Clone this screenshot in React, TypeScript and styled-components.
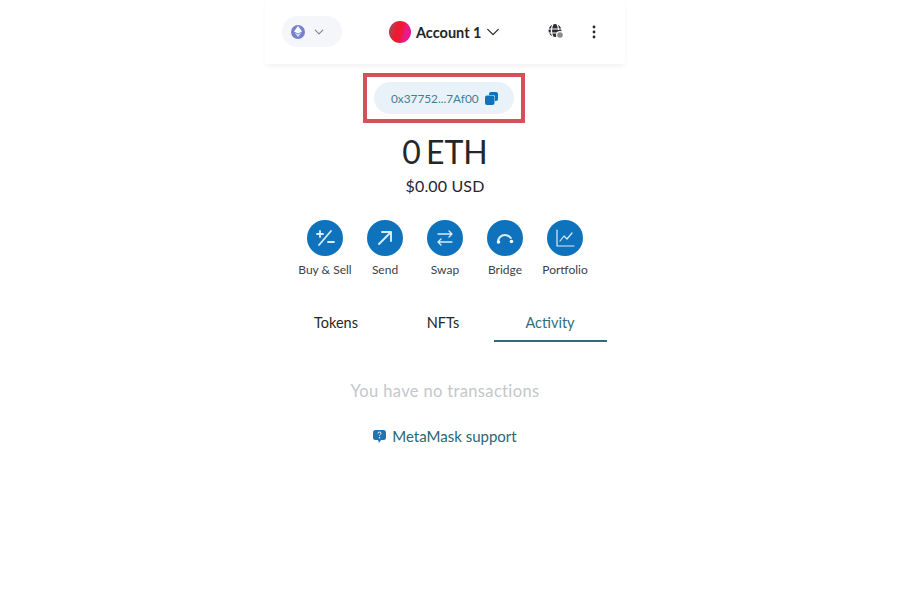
import React from 'react';
import styled, {createGlobalStyle} from 'styled-components';

const GlobalStyle = createGlobalStyle`
  html, body {
    margin: 0;
    padding: 0;
    background: #fff;
  }
  body {
    font-family: Lato, "Noto Sans", sans-serif;
    color: #24272a;
  }
`

const Page = styled.div`
  width: 900px;
  height: 600px;
  display: flex;
  justify-content: center;
  overflow: hidden;
`

const Wallet = styled.div`
  width: 360px;
  margin-left: -10px;
  display: flex;
  flex-direction: column;
  align-items: center;
`

const Header = styled.header`
  width: 100%;
  height: 64px;
  box-sizing: border-box;
  padding: 16px 14px 0 17px;
  display: flex;
  align-items: flex-start;
  box-shadow: 0 3px 5px -1px rgba(0, 0, 0, 0.06);
`

const NetworkPill = styled.div`
  width: 60px;
  height: 31px;
  box-sizing: border-box;
  padding-left: 9px;
  display: flex;
  align-items: center;
  gap: 9px;
  border-radius: 16px;
  background: #f4f6f9;
`

const NetworkDot = styled.div`
  width: 14px;
  height: 14px;
  border-radius: 50%;
  background: #7583cf;
  display: flex;
  align-items: center;
  justify-content: center;
`

const AccountButton = styled.div`
  margin-left: 47px;
  height: 32px;
  display: flex;
  align-items: center;
  gap: 4px;
  font-size: 14.5px;
  font-weight: 700;
  color: #24272a;
`

const Avatar = styled.div`
  width: 22px;
  height: 22px;
  border-radius: 50%;
  margin-right: 1px;
  background: linear-gradient(105deg, #8a5a68 0%, #ea1c2c 35%, #f0183a 55%, #ea1a8c 72%, #e01590 100%);
`

const HeaderIcons = styled.div`
  margin-left: 47px;
  height: 32px;
  display: flex;
  align-items: center;
  gap: 20px;
`

const IconButton = styled.div`
  width: 18px;
  height: 18px;
  display: flex;
  align-items: center;
  justify-content: center;
`

const AddressFrame = styled.div`
  margin-top: 9px;
  margin-left: -2px;
  width: 162px;
  height: 50px;
  box-sizing: border-box;
  border: 4px solid #d2525a;
  display: flex;
  align-items: center;
  justify-content: center;
`

const AddressPill = styled.div`
  width: 140px;
  height: 32px;
  box-sizing: border-box;
  padding-left: 17px;
  display: flex;
  align-items: center;
  gap: 6px;
  border-radius: 16px;
  background: #e8f2f8;
  font-size: 11.8px;
  color: #3f7f96;
`

const Balance = styled.div`
  margin-top: 7px;
  font-size: 32px;
  line-height: 44px;
  color: #24272a;
  word-spacing: -3px;
`

const Fiat = styled.div`
  margin-top: 2px;
  font-size: 16px;
  letter-spacing: 0.15px;
  line-height: 20px;
  color: #24272a;
`

const Actions = styled.div`
  margin-top: 24px;
  display: grid;
  grid-template-columns: repeat(5, 60px);
`

const Action = styled.div`
  display: flex;
  flex-direction: column;
  align-items: center;
  gap: 6px;
`

const ActionCircle = styled.div`
  width: 36px;
  height: 36px;
  border-radius: 50%;
  background: #0f72bd;
  display: flex;
  align-items: center;
  justify-content: center;
`

const ActionLabel = styled.span`
  font-size: 12px;
  line-height: 16px;
  white-space: nowrap;
  color: #3c4146;
`

const Tabs = styled.div`
  margin-top: 31px;
  margin-left: -4px;
  display: grid;
  grid-template-columns: repeat(3, 107px);
`

const Tab = styled.div<{ active?: boolean }>`
  position: relative;
  height: 33px;
  line-height: 28px;
  text-align: center;
  font-size: 14.5px;
  color: ${({active}) => active ? '#2f6f7e' : '#24272a'};

  &::after {
    content: '';
    display: ${({active}) => active ? 'block' : 'none'};
    position: absolute;
    left: -3px;
    right: -3px;
    bottom: 0;
    height: 2px;
    background: #2a6f78;
  }
`

const EmptyText = styled.div`
  margin-top: 38px;
  font-size: 16.500px;
  letter-spacing: 0.35px;
  line-height: 22px;
  color: #c4c7ca;
`

const Support = styled.div`
  margin-top: 22px;
  display: flex;
  align-items: center;
  gap: 6px;
  font-size: 15px;
  line-height: 24px;
  color: #2b6675;
`

const Chevron = ({size, color, width}: { size: number, color: string, width: number }) => (
  <svg width={size} height={size} viewBox="0 0 16 16" fill="none">
    <path d="M2 5l6 6 6-6" stroke={color} strokeWidth={width} strokeLinecap="round" strokeLinejoin="round" />
  </svg>
);

const stroke = {fill: 'none', stroke: '#d9eefa', strokeWidth: 1.6, strokeLinecap: 'round' as const, strokeLinejoin: 'round' as const};

const actions = [
  {
    label: 'Buy & Sell',
    icon: <path d="M3 7h6M6 4v6M5 18L17 4M14 15h6" {...stroke} strokeWidth={1.800} />,
  },
  {
    label: 'Send',
    icon: <path d="M5 17L17 5M8 5h9v9" {...stroke} strokeWidth={1.900} />,
  },
  {
    label: 'Swap',
    icon: <path d="M4 7h14M15 4l3 3-3 3M18 15H4M7 12l-3 3 3 3" {...stroke} strokeWidth={1.300} />,
  },
  {
    label: 'Bridge',
    icon: (
      <>
        <path d="M4 15c0-4 3-7 7-7 2.500 0 4.500 1.200 5.800 3" {...stroke} strokeWidth={2} />
        <circle cx="4.500" cy="15" r="1.800" fill="#fff" />
        <circle cx="17.500" cy="14.500" r="1.800" fill="#fff" />
      </>
    ),
  },
  {
    label: 'Portfolio',
    icon: <path d="M3 3v16h17M6 14l4-5 3 3 5-6" {...stroke} strokeWidth={1.200} />,
  },
];

const App = () => (
  <>
    <GlobalStyle />
    <Page>
      <Wallet>
        <Header>
          <NetworkPill>
            <NetworkDot>
              <svg width="8" height="11" viewBox="0 0 8 11">
                <path d="M4 0L0 5.500 4 7.500 8 5.500z" fill="#fff" />
                <path d="M0.500 6.500L4 11l3.500-4.500L4 8.500z" fill="#dfe3f7" />
              </svg>
            </NetworkDot>
            <Chevron size={10} color="#7d8590" width={1.800} />
          </NetworkPill>
          <AccountButton>
            <Avatar />
            Account 1
            <Chevron size={14} color="#24272a" width={1.500} />
          </AccountButton>
          <HeaderIcons>
            <IconButton>
              <svg width="18" height="18" viewBox="0 0 18 18">
                <circle cx="8" cy="7.500" r="6.500" fill="#2a2d31" />
                <path d="M1 6h14M2 10h9M6 1c-2 4-2 9 0 13M10 1c1 2 1.500 4 1.500 6" stroke="#fff" strokeWidth="1.200" fill="none" />
                <circle cx="13" cy="12" r="4" fill="#fff" />
                <circle cx="13" cy="12" r="2.800" fill="#8a8d90" />
              </svg>
            </IconButton>
            <IconButton>
              <svg width="4" height="14" viewBox="0 0 4 14">
                <circle cx="2" cy="2" r="1.400" fill="#24272a" />
                <circle cx="2" cy="7" r="1.400" fill="#24272a" />
                <circle cx="2" cy="12" r="1.400" fill="#24272a" />
              </svg>
            </IconButton>
          </HeaderIcons>
        </Header>
        <AddressFrame>
          <AddressPill>
            0x37752...7Af00
            <svg width="13" height="13" viewBox="0 0 13 13">
              <path d="M4 2a2 2 0 012-2h5a2 2 0 012 2v5a2 2 0 01-2 2H10V5a2 2 0 00-2-2H4z" fill="#0f72bd" />
              <rect x="0" y="3.500" width="9.500" height="9.500" rx="2" fill="#0f72bd" />
            </svg>
          </AddressPill>
        </AddressFrame>
        <Balance>0 ETH</Balance>
        <Fiat>$0.00 USD</Fiat>
        <Actions>
          {actions.map(({label, icon}) => (
            <Action key={label}>
              <ActionCircle>
                <svg width="22" height="22" viewBox="0 0 22 22">{icon}</svg>
              </ActionCircle>
              <ActionLabel>{label}</ActionLabel>
            </Action>
          ))}
        </Actions>
        <Tabs>
          <Tab>Tokens</Tab>
          <Tab>NFTs</Tab>
          <Tab active>Activity</Tab>
        </Tabs>
        <EmptyText>You have no transactions</EmptyText>
        <Support>
          <svg width="13" height="13" viewBox="0 0 13 13">
            <path d="M2.500 0h8A2.500 2.500 0 0113 2.500v5a2.500 2.500 0 01-2.500 2.500H8l-2 3-1-3H2.500A2.500 2.500 0 010 7.500v-5A2.500 2.500 0 012.500 0z" fill="#1f74b8" />
            <path d="M5 3.500a1.500 1.500 0 113 0c0 1-1.500 1-1.500 2.200" stroke="#fff" strokeWidth="1" fill="none" />
            <circle cx="6.500" cy="7.700" r="0.700" fill="#fff" />
          </svg>
          MetaMask support
        </Support>
      </Wallet>
    </Page>
  </>
);

export default App;
